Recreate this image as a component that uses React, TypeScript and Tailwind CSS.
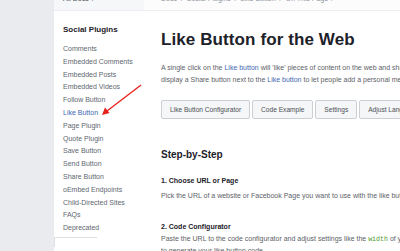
import React from 'react';

const sideLinks = [
  'Comments',
  'Embedded Comments',
  'Embedded Posts',
  'Embedded Videos',
  'Follow Button',
  'Like Button',
  'Page Plugin',
  'Quote Plugin',
  'Save Button',
  'Send Button',
  'Share Button',
  'oEmbed Endpoints',
  'Child-Directed Sites',
  'FAQs',
  'Deprecated',
];

const tabs = ['Like Button Configurator', 'Code Example', 'Settings', 'Adjust Language'];

const Sidebar = () => (
  <aside className="w-[90px] shrink-0 bg-white">
    <div className="h-[19px] bg-[#f6f7f9] border-b border-[#eceef1] pl-[9px] pt-[2px] text-[7px] text-[#4b4f56]">
      All Docs <span className="text-[6px]">▾</span>
    </div>
    <div className="pl-[9px] pt-[14px]">
      <div className="text-[8px] font-bold text-[#1d2129] leading-[10px]">Social Plugins</div>
      <ul className="mt-[8px]">
        {sideLinks.map((l) => (
          <li
            key={l}
            className={`text-[7px] leading-[12.8px] whitespace-nowrap ${l === 'Like Button' ? 'text-[#4267b2]' : 'text-[#606770]'}`}
          >
            {l}
          </li>
        ))}
      </ul>
    </div>
    <div className="mt-[2px] w-[43px] h-[10px] border-t border-l border-[#dddfe2] bg-white" />
  </aside>
);

const Main = () => (
  <main className="flex-1 min-w-0 bg-white">
    <div className="h-[19px] bg-[#fcfcfc] border-b border-[#eceef1] pl-[17px] pt-[2px] text-[7px] text-[#8d949e] whitespace-nowrap">
      Docs <span className="mx-[2px]">/</span> Social Plugins <span className="mx-[2px]">/</span> Like Button{' '}
      <span className="mx-[2px]">/</span> On This Page <span className="text-[6px]">▾</span>
    </div>
    <div className="pl-[17px] whitespace-nowrap">
      <h1 className="mt-[19px] text-[17px] leading-[20px] font-semibold text-[#1d2129] tracking-[0.1px]">
        Like Button for the Web
      </h1>
      <p className="mt-[12px] text-[7px] leading-[12px] text-[#5d6168]">
        A single click on the <span className="text-[#4267b2]">Like button</span> will 'like' pieces of content on the web and share them on Facebook.
        <br />
        display a Share button next to the <span className="text-[#4267b2]">Like button</span> to let people add a personal message and customize who they share with.
      </p>
      <div className="mt-[14px] flex gap-[2px]">
        {tabs.map((t) => (
          <div
            key={t}
            className="h-[19px] px-[8px] flex items-center shrink-0 rounded-[2px] border border-[#ccd0d5] bg-[#f5f6f7] text-[6.6px] text-[#4b4f56]"
          >
            {t}
          </div>
        ))}
      </div>
      <h2 className="mt-[30px] text-[10px] leading-[12px] font-bold text-[#1d2129]">Step-by-Step</h2>
      <h3 className="mt-[15px] text-[7px] leading-[10px] font-bold text-[#1d2129]">1. Choose URL or Page</h3>
      <p className="mt-[4px] text-[7px] leading-[12px] text-[#5d6168]">
        Pick the URL of a website or Facebook Page you want to use with the like button.
      </p>
      <h3 className="mt-[20px] text-[7px] leading-[10px] font-bold text-[#1d2129]">2. Code Configurator</h3>
      <p className="mt-[2px] text-[7px] leading-[10.5px] text-[#5d6168]">
        Paste the URL to the code configurator and adjust settings like the{' '}
        <code className="font-['Liberation_Mono',monospace] text-[6.6px] text-[#4c9a2a]">width</code> of your like button.
        <br />
        to generate your like button code.
      </p>
    </div>
  </main>
);

export default function App() {
  return (
    <div className="relative w-[400px] h-[251px] overflow-hidden bg-white font-['Liberation_Sans',Arial,sans-serif]">
      <div className="flex -mt-[8px] h-[270px]">
        <div className="w-[54px] shrink-0 bg-[#e9ebee]" />
        <Sidebar />
        <Main />
      </div>
      <svg className="absolute left-0 top-0 pointer-events-none" width="400" height="251" viewBox="0 0 400 251">
        <line x1="141" y1="85" x2="107" y2="111" stroke="#e8201c" strokeWidth="1.3" />
        <polygon points="102,115 105,107.5 109.5,113" fill="#e8201c" />
      </svg>
    </div>
  );
}
